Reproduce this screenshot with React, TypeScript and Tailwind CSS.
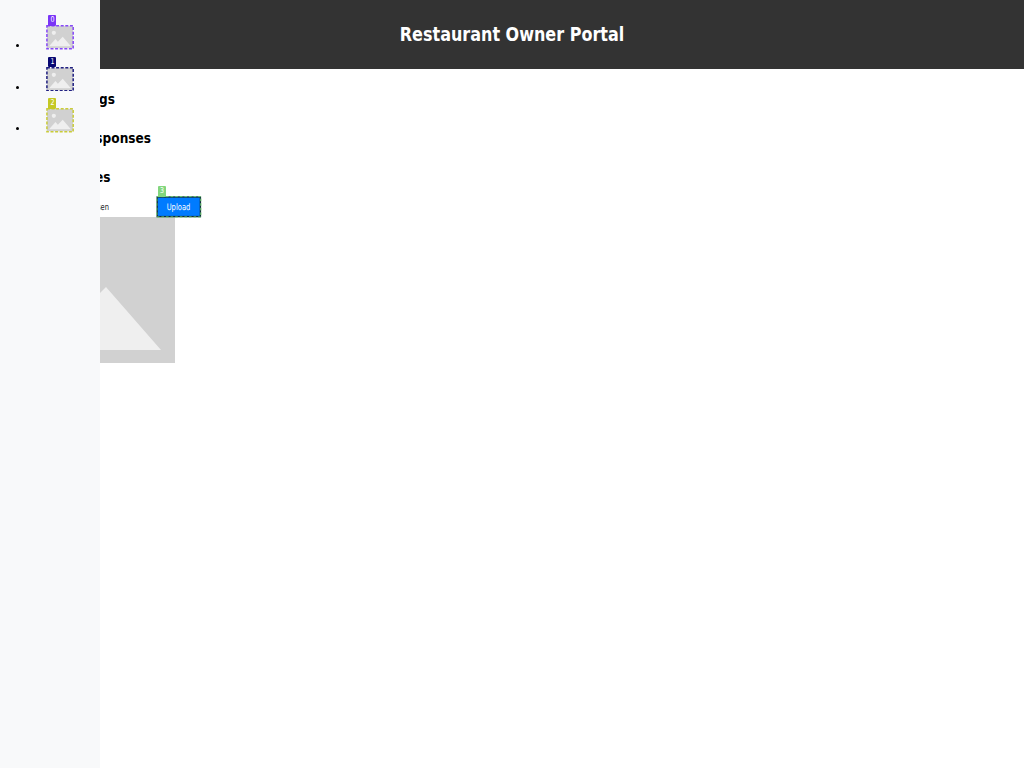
import React from "react";

function Placeholder({ className }: { className: string }) {
  return (
    <svg viewBox="0 0 175 146" preserveAspectRatio="none" className={className}>
      <rect width="175" height="146" fill="#d1d1d1" />
      <circle cx="46" cy="45" r="14" fill="#efefef" />
      <path d="M14 133 L57 86 L73 103 L106 70 L161 133 Z" fill="#efefef" />
    </svg>
  );
}

function DashedFrame({ width, height, color }: { width: number; height: number; color: string }) {
  return (
    <svg width={width} height={height} className="absolute left-0 top-0">
      <rect
        x="0.9"
        y="0.8"
        width={width - 1.7}
        height={height - 1.6}
        fill="none"
        stroke={color}
        strokeOpacity="0.9"
        strokeWidth="1.5"
        strokeDasharray="3 1.6"
      />
    </svg>
  );
}

const links = [
  { n: "0", tag: "bg-[#7a35f7]", color: "#7a35f7" },
  { n: "1", tag: "bg-[#080873]", color: "#080873" },
  { n: "2", tag: "bg-[#c4c824]", color: "#c4c824" },
];

const tagBase =
  "absolute flex w-2 items-center justify-center rounded-[1px] text-[7px] leading-none text-white";

const heading =
  "mt-[23px] whitespace-nowrap text-right text-[13.5px] font-bold leading-[16px]";

const stretched = "inline-block scale-y-[1.1]";

export default function App() {
  return (
    <div className="relative h-screen w-full overflow-hidden bg-white text-black [font-family:'DejaVu_Sans_Condensed','DejaVu_Sans',sans-serif] [font-stretch:condensed]">
      <header className="flex h-[69px] items-center justify-center bg-[#333333]">
        <h1 className="scale-y-[1.08] text-[17.8px] font-bold leading-none text-white">Restaurant Owner Portal</h1>
      </header>

      <main className="-mt-px">
        <h2 className={`${heading} w-[115px]`}><span className={stretched}>Ratings</span></h2>
        <h2 className={`${heading} w-[151px]`}><span className={stretched}>Responses</span></h2>
        <h2 className={`${heading} w-[110.5px]`}><span className={stretched}>Images</span></h2>
        <div className="mt-[11.3px] flex h-[21px] items-center">
          <span className="mt-[2px] w-[109px] scale-y-[1.2] text-right text-[7.5px] leading-none text-[#222222]">No file chosen</span>
          <button className="relative ml-[47px] flex h-[21px] w-[45px] items-center justify-center text-[7.5px] leading-none text-white">
            <svg width="45" height="21" className="absolute left-0 top-0 overflow-visible">
              <rect x="1.2" y="1" width="43.2" height="19.6" fill="#007bff" stroke="#102f40" strokeWidth="1.4" />
              <rect x="0.8" y="0.6" width="44" height="20.4" fill="none" stroke="#70d070" strokeWidth="1" strokeDasharray="2.6 2" />
            </svg>
            <span className="relative mt-[2px] scale-y-[1.2]">Upload</span>
            <span className={`${tagBase} -top-[10px] left-[2px] h-[10.5px] bg-[#82d67d]`}><span className="scale-y-[1.15]">3</span></span>
          </button>
        </div>
        <Placeholder className="block h-[146px] w-[175px]" />
      </main>

      <aside className="absolute inset-y-0 left-0 w-[100px] bg-[#f8f9fa]">
        <ul className="flex flex-col gap-[17px] pt-[25.3px]">
          {links.map((link) => (
            <li key={link.n} className="flex h-[24.6px] items-start">
              <span className="mt-[18.7px] ml-[16.3px] h-[3px] w-[2.7px] rounded-full bg-black" />
              <a className="relative ml-[27px] h-[24.2px] w-7 p-px">
                <Placeholder className="block h-full w-full" />
                <DashedFrame width={28} height={24.6} color={link.color} />
                <span className={`${tagBase} -top-[10px] left-[2.5px] h-[10.5px] ${link.tag}`}><span className="scale-y-[1.15]">{link.n}</span></span>
              </a>
            </li>
          ))}
        </ul>
      </aside>
    </div>
  );
}
